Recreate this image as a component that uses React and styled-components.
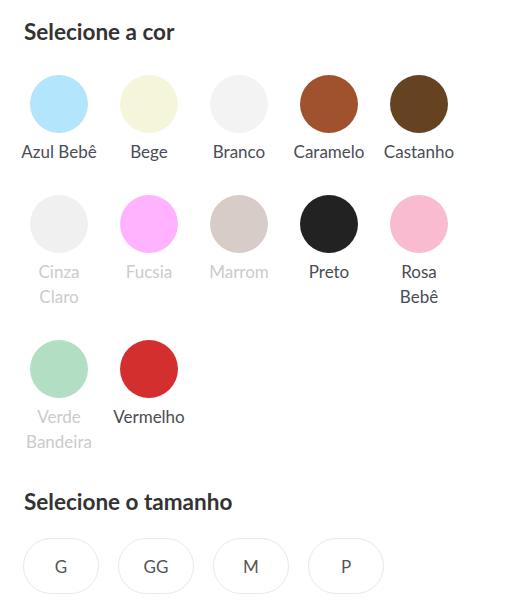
import React from "react";
import styled, { createGlobalStyle } from "styled-components";

const colors = [
  { name: "Azul Bebê", hex: "#b3e5fc" },
  { name: "Bege", hex: "#f5f5dc" },
  { name: "Branco", hex: "#f3f3f3" },
  { name: "Caramelo", hex: "#a0522d" },
  { name: "Castanho", hex: "#654321" },
  { name: "Cinza Claro", hex: "#f0f0f0", disabled: true },
  { name: "Fucsia", hex: "#ffb3ff", disabled: true },
  { name: "Marrom", hex: "#d7ccc8", disabled: true },
  { name: "Preto", hex: "#222222" },
  { name: "Rosa Bebê", hex: "#f8bbd0" },
  { name: "Verde Bandeira", hex: "#b2dfc4", disabled: true },
  { name: "Vermelho", hex: "#d32f2f" },
];

const sizes = ["G", "GG", "M", "P"];

const GlobalStyle = createGlobalStyle`
  body {
    margin: 0;
    background: #fff;
    font-family: Lato, "Open Sans", sans-serif;
  }
`;

const Page = styled.div`
  padding: 19px 0 0 0;
`;

const Title = styled.h2`
  margin: 0 0 0 24px;
  font-size: 22.5px;
  line-height: 26px;
  font-weight: 700;
  color: #333;
`;

const ColorGrid = styled.div`
  margin: 30px 0 0 19px;
  display: grid;
  grid-template-columns: repeat(5, 80px);
  column-gap: 10px;
  row-gap: 31px;
`;

const Swatch = styled.div`
  display: flex;
  flex-direction: column;
  align-items: center;
  cursor: ${(p) => (p.$disabled ? "default" : "pointer")};
`;

const Circle = styled.span`
  width: 58px;
  height: 58px;
  border-radius: 50%;
  background: ${(p) => p.$hex};
`;

const Label = styled.span`
  margin-top: 6px;
  max-width: 76px;
  text-align: center;
  font-size: 17px;
  line-height: 25px;
  color: ${(p) => (p.$disabled ? "#cbcbcb" : "#4a4d55")};
`;

const SizeTitle = styled(Title)`
  margin-top: 35px;
`;

const SizeRow = styled.div`
  margin: 23px 0 0 23px;
  display: flex;
  gap: 19px;
`;

const SizeButton = styled.button`
  width: 76px;
  height: 56px;
  border: 1px solid #e8e8ef;
  border-radius: 28px;
  background: #fff;
  font-family: Lato, "Open Sans", sans-serif;
  font-size: 17px;
  color: #555;
  cursor: pointer;
`;

const App = () => {
  return (
    <Page>
      <GlobalStyle />
      <Title>Selecione a cor</Title>
      <ColorGrid>
        {colors.map((c) => (
          <Swatch key={c.name} $disabled={c.disabled}>
            <Circle $hex={c.hex} />
            <Label $disabled={c.disabled}>{c.name}</Label>
          </Swatch>
        ))}
      </ColorGrid>
      <SizeTitle>Selecione o tamanho</SizeTitle>
      <SizeRow>
        {sizes.map((s) => (
          <SizeButton key={s}>{s}</SizeButton>
        ))}
      </SizeRow>
    </Page>
  );
};

export default App;
